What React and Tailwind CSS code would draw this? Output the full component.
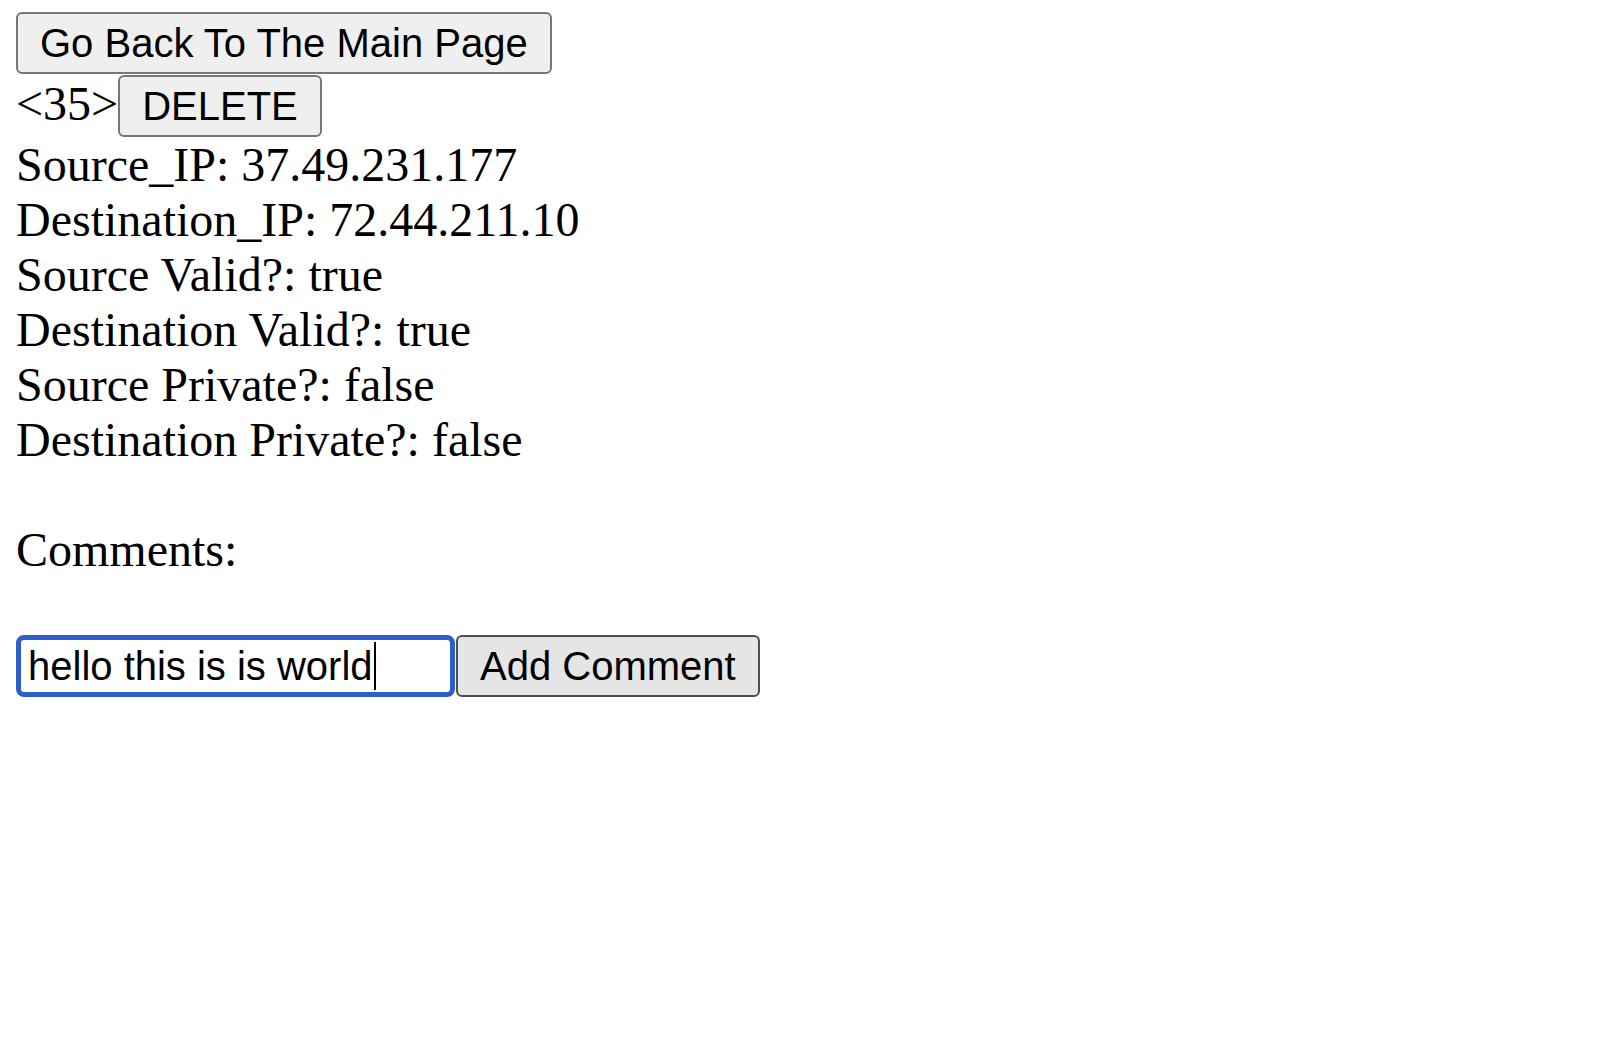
import React from 'react';

const lines = [
  'Source_IP: 37.49.231.177',
  'Destination_IP: 72.44.211.10',
  'Source Valid?: true',
  'Destination Valid?: true',
  'Source Private?: false',
  'Destination Private?: false',
];

const Btn = ({ children, hover }) => (
  <button
    className={`h-[62px] px-[22px] border-2 rounded-[6px] flex items-center text-[40px] leading-[46px] text-black font-['Liberation_Sans',Arial,sans-serif] ${
      hover ? 'bg-[#e5e5e5] border-[#4f4f4f]' : 'bg-[#efefef] border-[#767676]'
    }`}
  >
    {children}
  </button>
);

export default function App() {
  return (
    <div className="min-h-screen bg-white text-black pl-[16px] pt-[12px] text-[48px] leading-[55px] font-['Liberation_Serif','Times_New_Roman',serif]">
      <div className="flex">
        <Btn>Go Back To The Main Page</Btn>
      </div>
      <div className="flex items-baseline mt-[1px]">
        <span>&lt;35&gt;</span>
        <Btn>DELETE</Btn>
      </div>
      {lines.map((l) => (
        <div key={l}>{l}</div>
      ))}
      <div className="h-[55px]" />
      <div>Comments:</div>
      <div className="h-[55px]" />
      <div className="flex items-center gap-[1px] pt-[3px]">
        <div className="w-[439px] h-[62px] border-[5px] border-[#2b5fc9] rounded-[8px] bg-white pl-[7px] flex items-center text-[40px] font-['Liberation_Sans',Arial,sans-serif]">
          <span>hello this is is world</span>
          <span className="inline-block w-[2px] h-[48px] bg-black ml-[1px]" />
        </div>
        <Btn hover>Add Comment</Btn>
      </div>
    </div>
  );
}
